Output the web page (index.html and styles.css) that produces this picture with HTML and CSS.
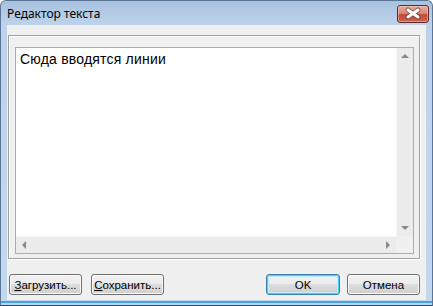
FILE: index.html
```html
<!DOCTYPE html>
<html lang="ru">
<head>
    <meta charset="UTF-8">
    <title>Редактор текста</title>
    <link rel="stylesheet" href="styles.css">
</head>
<body>
    <div class="window">
        <div class="titlebar">
            <span class="title">Редактор текста</span>
            <button class="close" title="Закрыть">
                <svg width="32" height="18" viewBox="0 0 32 18">
                    <path d="M11 5 L21 12 M21 5 L11 12" stroke="#5b2f2a" stroke-width="5" stroke-linecap="round" opacity="0.55"/>
                    <path d="M11 5 L21 12 M21 5 L11 12" stroke="#ffffff" stroke-width="3" stroke-linecap="round"/>
                </svg>
            </button>
        </div>

        <div class="client">
            <div class="groupbox">
                <div class="memo">
                    <div class="memo-text">Сюда вводятся линии</div>
                    <div class="vscroll">
                        <span class="sb-btn"><i class="arrow arrow-up"></i></span>
                        <span class="sb-btn"><i class="arrow arrow-down"></i></span>
                    </div>
                    <div class="hscroll">
                        <span class="sb-btn"><i class="arrow arrow-left"></i></span>
                        <span class="sb-btn"><i class="arrow arrow-right"></i></span>
                    </div>
                    <div class="corner"></div>
                </div>
            </div>

            <div class="buttons">
                <div class="btn-group">
                    <button class="btn"><u>З</u>агрузить...</button>
                    <button class="btn"><u>С</u>охранить...</button>
                </div>
                <div class="btn-group btn-group-right">
                    <button class="btn btn-default">OK</button>
                    <button class="btn">Отмена</button>
                </div>
            </div>
        </div>
    </div>
</body>
</html>
```

FILE: styles.css
```css
:root {
    --frame: #bcd2ea;
    --face: #f0f0f0;
    --edge: #5b7596;
    --memo-border: #8fb2d8;
}

* {
    box-sizing: border-box;
    margin: 0;
    padding: 0;
}

body {
    width: 433px;
    height: 306px;
    overflow: hidden;
    background: #fff;
}

.window {
    width: 433px;
    height: 306px;
    border: 1px solid var(--edge);
    border-bottom-color: #2c4a6a;
    border-radius: 6px 6px 0 0;
    background: linear-gradient(#a8c2df, #bed3eb 24px, #c3d7ee calc(100% - 4px), #4aa2dc calc(100% - 4px), #4aa2dc calc(100% - 2px), #b9d4ee calc(100% - 2px));
    display: flex;
    flex-direction: column;
}

/* title bar */
.titlebar {
    height: 24px;
    display: flex;
    justify-content: space-between;
    padding: 0 3px 0 6px;
}

.title {
    font: 12px "Noto Sans", sans-serif;
    color: #000;
    line-height: 24px;
    padding-top: 1px;
}

.close {
    width: 32px;
    height: 18px;
    margin-top: 4px;
    border: 1px solid #5e2a25;
    border-radius: 3px;
    background: linear-gradient(#e8ab9b 0, #d98a78 45%, #c24b3a 55%, #cc6450 100%);
    box-shadow: inset 0 0 0 1px rgba(255, 220, 210, 0.45);
    display: flex;
}

.close svg {
    margin: -1px;
}

/* client area */
.client {
    flex: 1;
    margin: 0 6px 5px;
    background: var(--face);
    display: flex;
    flex-direction: column;
}

.groupbox {
    width: 412px;
    height: 224px;
    margin: 10px 0 0 1px;
    padding: 11px 5px 4px 6px;
    border: 1px solid #a0a0a0;
    box-shadow: 1px 1px 0 #fff, inset 1px 1px 0 #fff;
}

.memo {
    width: 399px;
    height: 207px;
    border: 1px solid var(--memo-border);
    background: #fff;
    display: grid;
    grid-template-columns: 1fr 17px;
    grid-template-rows: 1fr 17px;
}

.memo-text {
    padding: 3px 4px;
    font: 14px/16px "Liberation Sans", Arial, sans-serif;
    letter-spacing: 0.2px;
    color: #000;
}

/* scroll bars */
.vscroll,
.hscroll {
    background: #ececec;
    display: flex;
    justify-content: space-between;
}

.vscroll {
    flex-direction: column;
    border-left: 1px solid #f6f6f6;
}

.hscroll {
    border-top: 1px solid #f6f6f6;
}

.corner {
    background: var(--face);
}

.sb-btn {
    width: 16px;
    height: 16px;
    display: flex;
    align-items: center;
    justify-content: center;
}

.arrow {
    width: 0;
    height: 0;
    border: 4px solid transparent;
}

.arrow-up {
    border-bottom-color: #8a8a8a;
    border-top-width: 0;
}

.arrow-down {
    border-top-color: #8a8a8a;
    border-bottom-width: 0;
}

.arrow-left {
    border-right-color: #8a8a8a;
    border-left-width: 0;
}

.arrow-right {
    border-left-color: #8a8a8a;
    border-right-width: 0;
}

/* buttons */
.buttons {
    display: flex;
    justify-content: space-between;
    margin-top: 15px;
    padding: 0 6px 0 2px;
}

.btn-group {
    display: flex;
    gap: 9px;
}

.btn-group-right {
    gap: 7px;
}

.btn {
    width: 73px;
    height: 21px;
    border: 1px solid #707070;
    border-radius: 3px;
    background: linear-gradient(#f2f2f2 0, #ebebeb 50%, #dddddd 50%, #cfcfcf 100%);
    box-shadow: inset 0 0 0 1px #fcfcfc;
    font: 11.5px "Liberation Sans", Arial, sans-serif;
    color: #000;
}

.btn-default {
    width: 74px;
    border-color: #3c7fb1;
    box-shadow: inset 0 0 0 1px #48d0fb, inset 0 0 0 2px #c3ecfd;
}
```
